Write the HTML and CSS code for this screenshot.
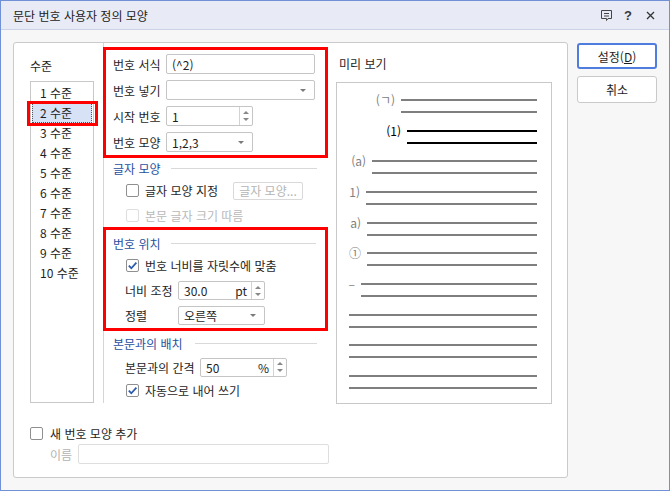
FILE: index.html
```html
<!DOCTYPE html>
<html lang="ko">
<head>
<meta charset="utf-8">
<title>문단 번호 사용자 정의 모양</title>
<link rel="stylesheet" href="styles.css">
</head>
<body>
<div class="window">
  <div class="titlebar">
    <span class="title">문단 번호 사용자 정의 모양</span>
    <div class="tb-icons">
      <svg class="ico-memo" width="13" height="13" viewBox="0 0 13 13"><path d="M1.5 1.5H11.5V9.5H8L6.5 11.5V9.5H1.5Z" fill="none" stroke="#444" stroke-width="1"/><path d="M4 4.5H9M4 7H9" stroke="#444" stroke-width="1"/></svg>
      <span class="help">?</span>
      <svg class="ico-close" width="9" height="9" viewBox="0 0 9 9"><path d="M1 1L8 8M8 1L1 8" stroke="#333" stroke-width="1.3"/></svg>
    </div>
  </div>
  <div class="main">
    <div class="panel">
      <div class="panel-top">
        <div class="col-level">
          <div class="lbl-level">수준</div>
          <ul class="level-list">
            <li>1 수준</li>
            <li class="sel">2 수준</li>
            <li>3 수준</li>
            <li>4 수준</li>
            <li>5 수준</li>
            <li>6 수준</li>
            <li>7 수준</li>
            <li>8 수준</li>
            <li>9 수준</li>
            <li>10 수준</li>
          </ul>
        </div>
        <div class="col-mid">
          <div class="grp grp1">
            <div class="frow"><span class="flabel">번호 서식</span><span class="field w149"><span class="val">(^2)</span></span></div>
            <div class="frow"><span class="flabel">번호 넣기</span><span class="field w149"><span class="val"></span><span class="arrow"></span></span></div>
            <div class="frow"><span class="flabel">시작 번호</span><span class="field w87"><span class="val">1</span><span class="spin"><span class="up"></span><span class="dn"></span></span></span></div>
            <div class="frow"><span class="flabel">번호 모양</span><span class="field w87"><span class="val">1,2,3</span><span class="arrow"></span></span></div>
          </div>
          <div class="sechead s-char">글자 모양</div>
          <div class="crow c-char"><span class="cb"></span><span>글자 모양 지정</span><span class="btn-dis">글자 모양...</span></div>
          <div class="crow dis"><span class="cb"></span><span>본문 글자 크기 따름</span></div>
          <div class="grp grp2">
            <div class="sechead">번호 위치</div>
            <div class="crow c-fit"><span class="cb on"><svg width="11" height="11" viewBox="0 0 11 11"><path d="M1.8 5.6L4.3 8.2L9.4 2.6" fill="none" stroke="#2b5aab" stroke-width="1.7"/></svg></span><span>번호 너비를 자릿수에 맞춤</span></div>
            <div class="srow"><span class="slabel">너비 조정</span><span class="field w87 sm"><span class="val">30.0</span><span class="unit">pt</span><span class="spin"><span class="up"></span><span class="dn"></span></span></span></div>
            <div class="srow"><span class="slabel">정렬</span><span class="field w87 sm"><span class="val">오른쪽</span><span class="arrow"></span></span></div>
          </div>
          <div class="sechead s-body">본문과의 배치</div>
          <div class="srow r-gap"><span class="slabel wide">본문과의 간격</span><span class="field w87 sm"><span class="val">50</span><span class="unit">%</span><span class="spin"><span class="up"></span><span class="dn"></span></span></span></div>
          <div class="crow c-auto"><span class="cb on"><svg width="11" height="11" viewBox="0 0 11 11"><path d="M1.8 5.6L4.3 8.2L9.4 2.6" fill="none" stroke="#2b5aab" stroke-width="1.7"/></svg></span><span>자동으로 내어 쓰기</span></div>
        </div>
        <div class="col-preview">
          <div class="pv-title">미리 보기</div>
          <div class="pv-box">
            <div class="pv-item"><span class="pv-num">(ㄱ)</span><span class="pv-lines w136"><i></i><i></i></span></div>
            <div class="pv-item active"><span class="pv-num">(1)</span><span class="pv-lines w130"><i></i><i></i></span></div>
            <div class="pv-item"><span class="pv-num">(a)</span><span class="pv-lines w165"><i></i><i></i></span></div>
            <div class="pv-item"><span class="pv-num">1)</span><span class="pv-lines w171"><i></i><i></i></span></div>
            <div class="pv-item"><span class="pv-num">a)</span><span class="pv-lines w170"><i></i><i></i></span></div>
            <div class="pv-item"><span class="pv-num">①</span><span class="pv-lines w170"><i></i><i></i></span></div>
            <div class="pv-item"><span class="pv-num">–</span><span class="pv-lines w176"><i></i><i></i></span></div>
            <div class="pv-item"><span class="pv-lines w188"><i></i><i></i></span></div>
            <div class="pv-item"><span class="pv-lines w188"><i></i><i></i></span></div>
            <div class="pv-item"><span class="pv-lines w188"><i></i><i></i></span></div>
          </div>
        </div>
      </div>
      <div class="panel-bottom">
        <div class="crow-new"><span class="cb"></span><span>새 번호 모양 추가</span></div>
        <div class="name-row"><span class="name-lbl">이름</span><span class="field name"></span></div>
      </div>
    </div>
    <div class="buttons">
      <button class="btn primary">설정(<u>D</u>)</button>
      <button class="btn">취소</button>
    </div>
  </div>
</div>
</body>
</html>
```

FILE: styles.css
```css
html, body {
  margin: 0;
  padding: 0;
}
body {
  font-family: "Noto Sans CJK KR", "Noto Sans", sans-serif;
  font-size: 12px;
  color: #1e1e1e;
  background: #ffffff;
}
.window {
  width: 670px;
  height: 491px;
  box-sizing: border-box;
  border: 1px solid #7191d6;
  background: #f7f7f7;
  display: flex;
  flex-direction: column;
}
.titlebar {
  height: 28px;
  flex: none;
  background: #e8ebf6;
  border-bottom: 1px solid #cdd3e6;
  display: flex;
  align-items: center;
  padding: 0 14px 0 12px;
}
.title {
  flex: 1;
  font-size: 12px;
  color: #222;
}
.tb-icons {
  display: flex;
  align-items: center;
}
.ico-memo { margin-right: 11px; }
.help {
  font-family: "Liberation Sans", sans-serif;
  font-weight: bold;
  font-size: 13px;
  color: #3a3a3a;
  margin-right: 14px;
}
.main {
  display: flex;
  align-items: flex-start;
  padding: 12px 0 0 12px;
  gap: 9px;
}
.panel {
  width: 555px;
  height: 436px;
  box-sizing: border-box;
  border: 1px solid #cacaca;
  border-radius: 3px;
  background: #fff;
  flex: none;
}
.panel-top {
  display: flex;
  height: 361px;
}
.col-level {
  margin-left: 16px;
  width: 64px;
  padding-top: 14px;
}
.lbl-level {
  height: 18px;
  line-height: 18px;
  margin-bottom: 6px;
}
.level-list {
  list-style: none;
  margin: 0;
  padding: 1px 0 0;
  height: 322px;
  box-sizing: border-box;
  border: 1px solid #c8c8c8;
}
.level-list li {
  height: 20px;
  line-height: 20px;
  padding-left: 9px;
}
.level-list li.sel {
  position: relative;
  margin: 0 1px;
  padding-left: 8px;
  background: #d8e2f6;
  outline: 1px dotted #555;
  outline-offset: -1px;
}
.level-list li.sel::after {
  content: "";
  position: absolute;
  left: -5px;
  right: -6px;
  top: -2px;
  bottom: -3px;
  border: 3px solid #f00;
}
.col-mid {
  margin-left: 9px;
  width: 224px;
  height: 360px;
  border-left: 1px solid #d5d5d5;
  flex: none;
}
.grp {
  width: 223px;
  box-sizing: border-box;
  outline: 3px solid #f00;
  outline-offset: -2px;
}
.grp1 {
  margin-top: 5px;
  padding: 3px 0 2px;
}
.grp2 {
  margin-top: 1px;
  padding: 5px 0 2px;
}
.frow {
  display: flex;
  align-items: center;
  height: 26px;
  padding-left: 9px;
}
.flabel { width: 53px; }
.field {
  height: 20px;
  box-sizing: border-box;
  border: 1px solid #c5c5c5;
  border-radius: 2px;
  background: #fff;
  display: flex;
  align-items: center;
}
.field.sm { height: 19px; }
.field .val {
  flex: 1;
  padding-left: 5px;
  white-space: nowrap;
}
.field .unit { margin-right: 4px; }
.w149 { width: 149px; }
.w87 { width: 87px; }
.arrow {
  width: 0;
  height: 0;
  border-left: 3px solid transparent;
  border-right: 3px solid transparent;
  border-top: 3px solid #7a7a7a;
  margin-right: 8px;
}
.spin {
  width: 12px;
  align-self: stretch;
  border-left: 1px solid #d3d3d3;
  display: flex;
  flex-direction: column;
  justify-content: center;
  align-items: center;
  gap: 4px;
}
.spin .up, .spin .dn {
  width: 0;
  height: 0;
  border-left: 3px solid transparent;
  border-right: 3px solid transparent;
}
.spin .up { border-bottom: 3px solid #888; }
.spin .dn { border-top: 3px solid #888; }
.sechead {
  display: flex;
  align-items: center;
  height: 20px;
  padding-left: 9px;
  color: #1f4f9e;
}
.sechead::after {
  content: "";
  flex: 1;
  height: 1px;
  background: #d9d9d9;
  margin: 0 11px 0 10px;
}
.s-char { margin-top: 1px; }
.s-body { margin-top: 3px; }
.s-body::after { margin-left: 12px; }
.crow {
  display: flex;
  align-items: center;
  gap: 6px;
  height: 24px;
  padding-left: 22px;
}
.c-char { height: 25px; }
.c-auto { height: 22px; }
.grp .crow { height: 25px; }
.crow.dis { color: #b9b9b9; }
.crow.dis .cb { border-color: #dedede; }
.cb {
  width: 13px;
  height: 13px;
  box-sizing: border-box;
  border: 1px solid #8f8f8f;
  border-radius: 2px;
  background: #fff;
  display: inline-flex;
  align-items: center;
  justify-content: center;
  flex: none;
}
.btn-dis {
  margin-left: 9px;
  width: 70px;
  height: 18px;
  box-sizing: border-box;
  border: 1px solid #d9d9d9;
  border-radius: 2px;
  color: #b5b5b5;
  display: flex;
  align-items: center;
  justify-content: center;
}
.srow {
  display: flex;
  align-items: center;
  height: 25px;
  padding-left: 21px;
}
.r-gap {
  margin-top: 2px;
  height: 24px;
}
.slabel { width: 53px; }
.slabel.wide { width: 75px; }
.col-preview {
  margin-left: 8px;
  padding-top: 12px;
}
.pv-title {
  height: 18px;
  line-height: 18px;
  padding-left: 3px;
  margin-bottom: 9px;
}
.pv-box {
  width: 216px;
  height: 322px;
  box-sizing: border-box;
  border: 1px solid #c8c8c8;
  padding: 16px 14px 0 0;
}
.pv-item {
  display: flex;
  justify-content: flex-end;
  align-items: flex-start;
  height: 30.67px;
}
.pv-num {
  font-size: 12px;
  line-height: 14px;
  margin-top: -6px;
  margin-right: 6px;
  color: #808080;
  white-space: nowrap;
}
.pv-lines {
  display: flex;
  flex-direction: column;
  gap: 10px;
}
.pv-lines i {
  display: block;
  height: 2px;
  background: #7f7f7f;
}
.pv-item.active .pv-num { color: #000; }
.pv-item.active .pv-lines i { background: #000; }
.w136 { width: 136px; }
.w130 { width: 130px; }
.w165 { width: 165px; }
.w171 { width: 171px; }
.w170 { width: 170px; }
.w176 { width: 176px; }
.w188 { width: 188px; }
.panel-bottom {
  padding-left: 16px;
}
.crow-new {
  display: flex;
  align-items: center;
  gap: 7px;
  height: 18px;
  margin-top: 20px;
}
.name-row {
  display: flex;
  align-items: center;
  height: 20px;
  margin-top: 2px;
  padding-left: 20px;
}
.name-lbl {
  width: 28px;
  color: #b3b3b3;
}
.field.name {
  width: 251px;
  border-color: #dedede;
}
.buttons {
  display: flex;
  flex-direction: column;
  gap: 7px;
  margin-top: 1px;
}
.btn {
  width: 80px;
  height: 27px;
  box-sizing: border-box;
  border: 1px solid #c9c9c9;
  border-radius: 3px;
  background: #fff;
  font: inherit;
  color: #1e1e1e;
  padding: 0;
}
.btn.primary {
  height: 26px;
  border: 2px solid #4f7ddf;
}
```
